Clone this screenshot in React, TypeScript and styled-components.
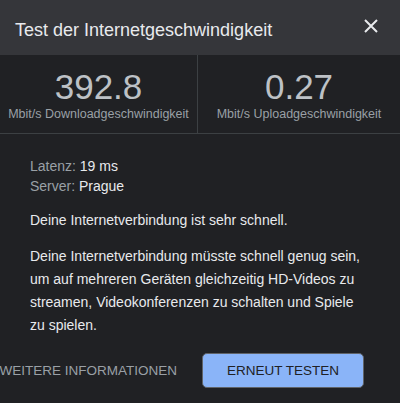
import React from "react";
import styled, { createGlobalStyle } from "styled-components";

const Global = createGlobalStyle`
  html, body { margin: 0; padding: 0; background: #202124; }
  body { font-family: "Liberation Sans", Arial, sans-serif; }
  * { box-sizing: border-box; }
`;

const Dialog = styled.div`
  width: 400px;
  height: 403px;
  background: #202124;
  display: flex;
  flex-direction: column;
  overflow: hidden;
`;

const Header = styled.div`
  height: 55px;
  background: #35363a;
  display: flex;
  align-items: center;
  justify-content: space-between;
  padding: 6px 19px 0 15px;
`;

const Title = styled.h1`
  margin: 0;
  font-size: 18px;
  font-weight: 400;
  color: #e8eaed;
`;

const CloseButton = styled.button`
  width: 20px;
  height: 20px;
  padding: 0;
  margin-top: -9px;
  border: none;
  background: none;
  display: flex;
  align-items: center;
  justify-content: center;
  cursor: pointer;
`;

const Stats = styled.div`
  height: 79px;
  display: grid;
  grid-template-columns: 198px 1fr;
  border-bottom: 1px solid #3c4043;
`;

const Stat = styled.div<{ $divider?: boolean }>`
  display: flex;
  flex-direction: column;
  align-items: center;
  padding-top: 15px;
  border-right: ${(p) => (p.$divider ? "1px solid #3c4043" : "none")};
`;

const Value = styled.div`
  font-size: 35px;
  line-height: 34px;
  color: #bdc1c6;
`;

const Unit = styled.div`
  font-size: 12.5px;
  line-height: 16px;
  margin-top: 2px;
  color: #9aa0a6;
  white-space: nowrap;
`;

const Body = styled.div`
  padding: 22px 30px 0 30px;
  color: #e8eaed;
  font-size: 14px;
`;

const InfoLine = styled.div`
  line-height: 20px;
`;

const Label = styled.span`
  color: #9aa0a6;
`;

const Paragraph = styled.p`
  margin: 13px 0 0;
  line-height: 23px;
`;

const Footer = styled.div`
  display: flex;
  align-items: center;
  justify-content: flex-end;
  padding: 16px 36px 0 0;
  gap: 25px;
`;

const TextButton = styled.button`
  border: none;
  background: none;
  padding: 0;
  font-family: inherit;
  font-size: 13.5px;
  color: #9aa0a6;
  text-transform: uppercase;
  white-space: nowrap;
`;

const PrimaryButton = styled.button`
  flex-shrink: 0;
  width: 162px;
  height: 35px;
  border-radius: 5px;
  border: 1px solid #5f6368;
  background: #8ab4f8;
  color: #202124;
  font-family: inherit;
  font-size: 13.5px;
  text-transform: uppercase;
`;

export default function App() {
  return (
    <>
      <Global />
      <Dialog>
        <Header>
          <Title>Test der Internetgeschwindigkeit</Title>
          <CloseButton aria-label="Schließen">
            <svg width="14" height="14" viewBox="0 0 14 14">
              <path d="M1 1L13 13M13 1L1 13" stroke="#e8eaed" strokeWidth="2" />
            </svg>
          </CloseButton>
        </Header>
        <Stats>
          <Stat $divider>
            <Value>392.8</Value>
            <Unit>Mbit/s Downloadgeschwindigkeit</Unit>
          </Stat>
          <Stat>
            <Value>0.27</Value>
            <Unit>Mbit/s Uploadgeschwindigkeit</Unit>
          </Stat>
        </Stats>
        <Body>
          <InfoLine>
            <Label>Latenz:</Label> 19 ms
          </InfoLine>
          <InfoLine>
            <Label>Server:</Label> Prague
          </InfoLine>
          <Paragraph>Deine Internetverbindung ist sehr schnell.</Paragraph>
          <Paragraph>
            Deine Internetverbindung müsste schnell genug sein, um auf mehreren
            Geräten gleichzeitig HD-Videos zu streamen, Videokonferenzen zu
            schalten und Spiele zu spielen.
          </Paragraph>
        </Body>
        <Footer>
          <TextButton>Weitere Informationen</TextButton>
          <PrimaryButton>Erneut testen</PrimaryButton>
        </Footer>
      </Dialog>
    </>
  );
}
